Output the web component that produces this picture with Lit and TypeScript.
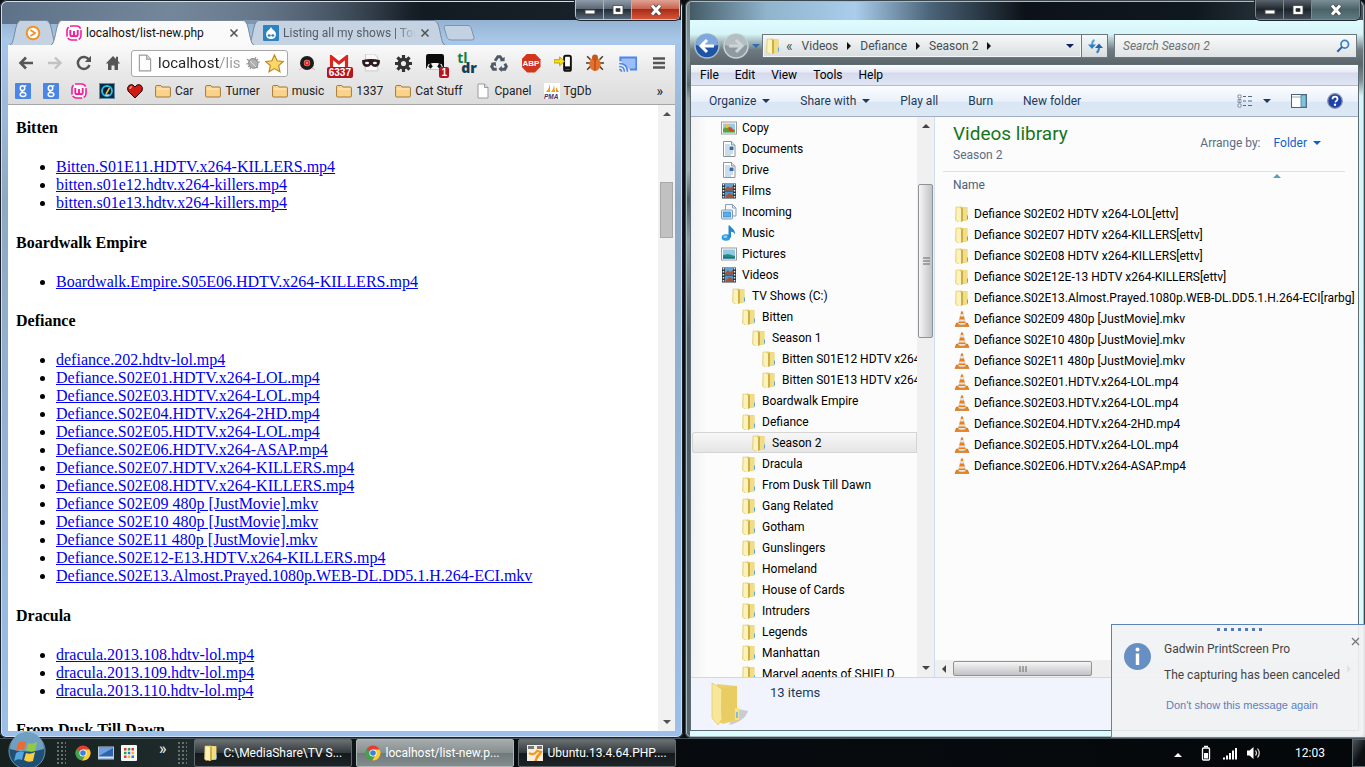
import { LitElement, html, css, svg, nothing } from "lit";
import { customElement } from "lit/decorators.js";
import { classMap } from "lit/directives/class-map.js";

const box = (size: number, view: string, body: unknown) =>
  html`<svg width=${size} height=${size} viewBox=${view} aria-hidden="true">${body}</svg>`;

const glyphs: Record<string, unknown> = {
  folder: svg`<path d="M2 1h6l1 13-6 1.500L1.500 14z" fill="#f6e9a0" stroke="#dcc56c" stroke-width=".6"/><path d="M6 .8l7.500.4v13l-7.500 1.300z" fill="#e5cb66"/><path d="M3 1.500l4 1V16l-4-1.400z" fill="#fbf3ba"/><path d="M7 2.500l2-.8V15l-2 1z" fill="#cdae4b"/><path d="M9 1.200h4v13.400H9z" fill="#f0dd84"/><path d="M13.500 9.500v4" stroke="#5aa5dc"/>`,
  picture: svg`<rect x=".5" y="2" width="15" height="12" fill="#fff" stroke="#9a9a9a"/><rect x="2" y="3.5" width="12" height="9" fill="#8ccbe8"/><path d="M2 9l5-1 7 2v2.500H2z" fill="#2c8d7b"/><path d="M2 10.500l12 1v1H2z" fill="#1b68a8"/>`,
  copy: svg`<rect x=".5" y="2" width="15" height="12" fill="#fff" stroke="#9a9a9a"/><rect x="2" y="3.500" width="12" height="9" fill="#9cc7ef"/><path d="M2 9l4-3 8 4v2.500H2z" fill="#58a338"/><circle cx="6" cy="6" r="2" fill="#f0c130"/><path d="M7 8l3-1 3 4-4 1z" fill="#d5482c"/>`,
  doc: svg`<path d="M2.500.5h8l3.500 3.500v11.500H2.500z" fill="#fff" stroke="#8b949c"/><path d="M10.500.5v3.500H14" fill="#dde6ee" stroke="#8b949c"/><path d="M4 4h5M4 6h4M4 8h4M4 10h8M4 12h8M4 14h6" stroke="#8fb0ce" stroke-width=".9"/><rect x="8.500" y="5.500" width="4" height="3.500" fill="#2e6ba8"/>`,
  film: svg`<rect x="1" y=".5" width="14" height="15" fill="#26363f"/><rect x="4" y="1" width="8" height="6.500" fill="#5da6dc"/><rect x="4" y="8.500" width="8" height="6.500" fill="#4b94cf"/><path d="M4 6l3-3 2 2 3-2v4.500H4zM5 13l3-3 4 2v3H5z" fill="#a3543e"/><path d="M2.500 1v14M13.500 1v14" stroke="#e6eef0" stroke-width="1.500" stroke-dasharray="1.500 1.500"/>`,
  incoming: svg`<path d="M4.500.5h7l3.500 3.500V12H4.500z" fill="#f4f8fc" stroke="#8a9db4"/><path d="M11.500.5V4H15" fill="none" stroke="#8a9db4"/><rect x=".5" y="6" width="11" height="9" rx="1" fill="#dcecf9" stroke="#7e99b8"/><rect x="2.500" y="8" width="7" height="5" fill="#54aee8" stroke="#3384c2" stroke-width=".7"/>`,
  music: svg`<ellipse cx="5" cy="12.500" rx="4.300" ry="3.200" fill="#2f9be0"/><path d="M7.500 12.500V.5h1.500c1 3 5.500 3.500 5 9-1-2-2-2.500-4-2.800v5.800z" fill="#2487cc"/><ellipse cx="4.300" cy="11.800" rx="2" ry="1.200" fill="#8ed2f7"/>`,
  vlc: svg`<path d="M2.500 12h11l1.500 3.500H1z" fill="#ee8115" stroke="#b95a08" stroke-width=".5"/><path d="M7.200.5h1.600L11.800 13c-2 1.300-5.600 1.300-7.600 0z" fill="#e4e4e4" stroke="#aaa" stroke-width=".3"/><path d="M7.100 1L7.300.4h1.400L9.200 3H6.800zM6.100 5.500h3.800l.8 3H5.300zM4.900 10.500h6.200l.4 1.500H4.500z" fill="#ef7d12"/>`,
  bmfolder: svg`<path d="M.6 3.500q0-1 1-1h4.200l1.200 1.500h7.400q1 0 1 1v8q0 1-1 1H1.600q-1 0-1-1z" fill="#fbd28a" stroke="#a37b3c"/><path d="M1.500 6h13" stroke="#ffecc4"/>`,
  page: svg`<path d="M3 1h6.500L13 4.500V15H3z" fill="#fdfdfd" stroke="#9b9b9b"/><path d="M9.500 1v3.500H13" fill="#ddd" stroke="#9b9b9b"/>`,
  google: svg`<rect width="16" height="16" rx="1" fill="#4a86e8"/><ellipse cx="7.500" cy="5.200" rx="2.200" ry="2.400" fill="none" stroke="#fff" stroke-width="1.500"/><path d="M9 3.300l2.300-.6" stroke="#fff" stroke-width="1.200"/><path d="M7.500 7.700q-1.800 1 .5 1.600" fill="none" stroke="#fff" stroke-width="1.200"/><ellipse cx="8" cy="11.600" rx="2.800" ry="2" fill="none" stroke="#fff" stroke-width="1.500"/>`,
  wamp: svg`<rect x="1" y="1" width="14" height="14" rx="4.500" fill="#fff" stroke="#f0209a" stroke-width="1.600" stroke-dasharray="10 1.500"/><path d="M4.300 5v4.500q0 1.700 1.700 1.700T8 9.500V6v3.500q0 1.700 1.900 1.700t1.800-1.700V5" fill="none" stroke="#f0209a" stroke-width="1.900"/>`,
  gauge: svg`<rect x=".5" y=".5" width="15" height="15" fill="#0d2a44" stroke="#6c8aa0"/><circle cx="8" cy="8" r="5" fill="#072238" stroke="#2ec0e8" stroke-width="1.800"/><path d="M7 11l3.500-6" stroke="#ffc12e" stroke-width="1.500"/><path d="M6 12h4" stroke="#fff"/>`,
  heart: svg`<path d="M8 15L1 8Q-.5 4 2.500 2 6 .5 8 4q2-3.500 5.500-2Q16.500 4 15 8z" fill="#cf1c12" stroke="#220606"/><path d="M3 6q0-2 2-2.500" stroke="#ff9a8a" stroke-width="1.500" fill="none"/>`,
  pma: svg`<rect width="16" height="16" fill="#fff"/><path d="M2 9q3-3 4-8v8zM7 9q3-3 3-7l1 7zM12 9V4l3 5z" fill="#f39a1e"/><text x="0" y="15.500" font-size="6.500" font-weight="700" font-style="italic" font-family="Liberation Sans" fill="#2c3470">PMA</text>`,
  back: svg`<path d="M15 8H3M8 2.500L2.500 8 8 13.500" fill="none" stroke="#555" stroke-width="2.600"/>`,
  fwd: svg`<path d="M1 8h12M8 2.500L13.500 8 8 13.500" fill="none" stroke="#c2c2c2" stroke-width="2.400"/>`,
  reload: svg`<path d="M12.800 4.500A6 6 0 1 0 13.500 10" fill="none" stroke="#555" stroke-width="2.500"/><path d="M15 .8V7H8.800z" fill="#555"/>`,
  home: svg`<path d="M8 1L.8 8.500H3V15h3.500v-4.500h3V15H13V8.500h2.200L13 6V1.800h-2v2.300z" fill="#555"/>`,
  bug: svg`<g stroke="#999" stroke-width="1.200"><path d="M2 4l11 9M1 9l14-2M5 14l6-12M3 12L13 4"/></g><ellipse cx="8" cy="8.500" rx="4.500" ry="5" fill="#b1b1b1" stroke="#8d8d8d" transform="rotate(-35 8 8)"/><path d="M5 6l6 6" stroke="#ddd"/>`,
  star: svg`<path d="M8 .8l2.200 4.900 5.200.6-3.900 3.500 1.100 5.200L8 12.300 3.400 15l1.100-5.200L.6 6.300l5.200-.6z" fill="#fcd667" stroke="#b98a2b"/>`,
  record: svg`<circle cx="8" cy="8" r="7" fill="#1c1c1c"/><circle cx="8" cy="8" r="3.200" fill="#f08a84"/><circle cx="8" cy="8" r="2.600" fill="#e2231c"/><circle cx="8" cy="8" r=".8" fill="#fff"/><path d="M0 15q3-3 4-1M12 14q2-2 4 1" stroke="#f4a4a4" fill="none"/>`,
  mask: svg`<path d="M3 0h8l3 3v12H3z" fill="#f8f8f8" stroke="#c5c5c5" stroke-width=".8"/><path d="M0 5.500q8-2 16 0 0 6-4 6-2.500 0-4-2-1.500 2-4 2-4 0-4-6z" fill="#2c1c1e"/><ellipse cx="4.500" cy="8" rx="1.800" ry="1.100" fill="#fff"/><ellipse cx="11.500" cy="8" rx="1.800" ry="1.100" fill="#fff"/>`,
  gear: svg`<g stroke="#333" stroke-width="3"><path d="M8 0v16M0 8h16M2.300 2.300l11.400 11.400M13.700 2.300L2.300 13.700"/></g><circle cx="8" cy="8" r="5.600" fill="#333"/><circle cx="8" cy="8" r="2.400" fill="#eee"/>`,
  panda: svg`<rect width="16" height="14" rx="2" fill="#0b0b0b"/><path d="M0 14l2-5 4-1h4l4 1 2 5z" fill="#f5f5f5"/><path d="M4 8l2 3-2 2-2-2zM12 8l2 3-2 2-2-2z" fill="#111"/>`,
  recycle: svg`<g fill="none" stroke="#4d5a66" stroke-width="2.600"><path d="M4.500 6L7 2.300h2L10.800 5M13.200 8.500l1.300 2.500-1.300 2.500H10M6 13.500H3L1.500 11l1.300-2.300"/></g><path d="M8.500 6.500h4.500V2.500zM10.500 10.500v5.500L7.500 13.300zM.5 8L5 7l.5 4z" fill="#4d5a66"/>`,
  phone: svg`<rect x="9" y="1.500" width="6" height="13.500" rx="1.500" fill="#fff" stroke="#111" stroke-width="1.700"/><path d="M9.500 11h5v3h-5z" fill="#111"/><path d="M0 5h5V2.500L9.500 6.500 5 10.500V8H0z" fill="#f6dc1c" stroke="#988400" stroke-width=".6"/>`,
  beetle: svg`<path d="M1 2l3 3M15 2l-3 3M0 8h16M1 14l3-3M15 14l-3-3" stroke="#5a3b1c" stroke-width="1.300"/><ellipse cx="8" cy="9" rx="5" ry="6" fill="#e5702a"/><circle cx="8" cy="3" r="2.600" fill="#c8551a"/><path d="M8 5v9.500" stroke="#a94510"/>`,
  cast: svg`<path d="M2 6V3h13.500v10H10" fill="#9dbdf6" stroke="#4c86ec" stroke-width="1.700"/><path d="M1 8q7 0 7 7M1 10.600q4.400 0 4.400 4.400M1 13q2 0 2 2" fill="none" stroke="#4c86ec" stroke-width="1.300"/>`,
  menu: svg`<path d="M2 3.500h12M2 8h12M2 12.500h12" stroke="#555" stroke-width="2.400"/>`,
  play: svg`<circle cx="8" cy="8" r="6.300" fill="#fff" stroke="#f19227" stroke-width="2"/><path d="M5.500 5L10 8l-4.500 3" fill="none" stroke="#f19227" stroke-width="1.800"/>`,
  drupal: svg`<rect width="16" height="16" rx="1" fill="#2d83bf"/><path d="M8 2q1 2 3 3.500t2 4Q12.500 14 8 14T3 9.500q0-2.500 2-4T8 2z" fill="#fff"/><ellipse cx="6.200" cy="10.500" rx="1.500" ry="1.200" fill="#2d83bf"/><ellipse cx="9.800" cy="10.500" rx="1.500" ry="1.200" fill="#2d83bf"/>`,
  chromium: svg`<circle cx="8" cy="8" r="7.500" fill="#e23d32"/><path d="M8 8L1.500 4.200A7.500 7.500 0 0 0 7.200 15.500L11 9z" fill="#3fa54a"/><path d="M8 4.500h6.600A7.500 7.500 0 0 1 7.200 15.500L11 9z" fill="#f9cf2f"/><circle cx="8" cy="8" r="3.600" fill="#fff"/><circle cx="8" cy="8" r="2.800" fill="#3f7de0"/>`,
  desktop: svg`<rect x=".5" y="2" width="15" height="12" fill="#2e63ae" stroke="#b8cadd"/><path d="M1 3h14L1 11z" fill="#6ea0dd"/><rect x="1" y="11.500" width="14" height="2" fill="#d5e2ef"/>`,
  apps: svg`<rect width="16" height="16" rx="1" fill="#f7f7f7"/><g><path d="M3 3h2.500v2.500H3zM10.500 3H13v2.500h-2.500zM3 10.500h2.500V13H3z" fill="#e23b35"/><path d="M6.800 3h2.500v2.500H6.800zM3 6.800h2.500v2.500H3z" fill="#2e9e46"/><path d="M6.800 6.800h2.500v2.500H6.800zM10.500 10.500H13V13h-2.500z" fill="#3974de"/><path d="M10.500 6.800H13v2.500h-2.500zM6.800 10.500h2.500V13H6.800z" fill="#f5b81d"/></g>`,
  putty: svg`<rect width="16" height="16" fill="#f5eee0"/><path d="M1 1h6v3H1zM10 1h5v3h-5z" fill="#777"/><path d="M2 8q5 3 8-2l4 1-6 9M9 16q0-5 5-8" fill="none" stroke="#f0971c" stroke-width="2.200"/>`,
  refresh: svg`<path d="M7.500 2Q5 3 5 8" fill="none" stroke="#45a7dc" stroke-width="2.200"/><path d="M1 6.500h8L5 11z" fill="#2f7fc4"/><path d="M9.500 14.500Q12 13.500 12 9" fill="none" stroke="#3a83c4" stroke-width="2.200"/><path d="M8 10h8l-4-4.500z" fill="#2862ae"/>`,
  search: svg`<circle cx="10" cy="6" r="4.300" fill="#e9f3fb" stroke="#3b82c4" stroke-width="2"/><path d="M7 9l-5.500 5.500" stroke="#2b62ad" stroke-width="2.400"/>`,
  views: svg`<g fill="#fff" stroke="#6a7f96" stroke-width=".8"><path d="M1 2h3v3H1zM1 6.500h3v3H1zM1 11h3v3H1z"/></g><path d="M6 3.500h3M6 8h3M6 12.500h3M11 3.500h4M11 8h4M11 12.500h4" stroke="#54687f"/><path d="M2 8h1" stroke="#c33"/>`,
  preview: svg`<rect x=".5" y="1.500" width="15" height="13" fill="#fff" stroke="#4d617c"/><path d="M1 4h9" stroke="#9aa"/><rect x="10" y="2" width="5" height="12" fill="#7fc4dc" stroke="#4d7d9c" stroke-width=".8"/>`,
  help: svg`<circle cx="8" cy="8" r="7.300" fill="#1e41a8" stroke="#8a93a5" stroke-width="1.300"/><path d="M5.500 6.200q0-2.500 2.500-2.500t2.500 2.200Q10.500 7.500 8 9" fill="none" stroke="#fff" stroke-width="1.800"/><circle cx="8" cy="11.800" r="1.200" fill="#fff"/>`,
  battery: svg`<rect x="4.500" y="3" width="7" height="12" rx="1" fill="none" stroke="#fff" stroke-width="1.300"/><path d="M6 1.500h4" stroke="#fff" stroke-width="1.500"/><path d="M6 8h4v5.500H6z" fill="#fff"/>`,
  signal: svg`<path d="M2 12.500v2M5 10.500v4M8 8v6.500M11 5.500v9M14 3v11.500" stroke="#fff" stroke-width="2"/>`,
  sound: svg`<path d="M1 5.500h2.500L7.500 2v12L3.500 10.500H1z" fill="#fff"/><path d="M9.500 5.500q2 2.500 0 5M11.500 3.500q3.500 4.500 0 9" fill="none" stroke="#ddd" stroke-width="1.200"/>`,
};
const icon = (name: string, size = 16) => box(size, "0 0 16 16", glyphs[name]);
const tri = (dir: "up" | "down" | "left" | "right") => html`<i class="tri ${dir}"></i>`;

const triStyles = css`
  .tri { display: inline-block; flex: none; width: 0; height: 0; border: 4px solid transparent; }
  .tri.down { border-top-color: currentColor; border-bottom-width: 0; }
  .tri.up { border-bottom-color: currentColor; border-top-width: 0; }
  .tri.right { border-left-color: currentColor; border-right-width: 0; }
  .tri.left { border-right-color: currentColor; border-left-width: 0; }
`;
const baseStyles = css`
  * { box-sizing: border-box; }
  button, input { font: inherit; color: inherit; background: none; border: 0; padding: 0; margin: 0; min-width: 0; }
  input { outline: 0; }
  svg { display: block; flex: none; }
  a { color: inherit; text-decoration: none; }
`;

@customElement("caption-buttons")
class CaptionButtons extends LitElement {
  static styles = [baseStyles, css`
    :host { display: flex; height: 20px; border: 1px solid #b9c3cd; border-top: 0; border-radius: 0 0 5px 5px; overflow: hidden; box-shadow: 0 0 0 1px #20262d; }
    button { display: grid; place-items: center; width: 28px; border-right: 1px solid #a9b4bf; background: linear-gradient(#8f9ba8, #5c6875 45%, #232c36 50%, #56677a); }
    .close { width: 47px; border: 0; background: linear-gradient(#e0a293, #cb6450 45%, #a82d17 50%, #d5553a); }
    :host([inactive]) { border-color: #7d878f; }
    :host([inactive]) button { border-color: #7d878f; background: linear-gradient(#5b646d, #1d242b 50%, #414c58); }
    :host([inactive]) .close { background: linear-gradient(#7c9097, #4b6267 50%, #5d7a82); }
  `];
  render() {
    return html`
      <button aria-label="Minimize">${box(14, "0 0 14 14", svg`<rect x="2" y="7" width="10" height="4" fill="#fff" stroke="#444"/>`)}</button>
      <button aria-label="Maximize">${box(14, "0 0 14 14", svg`<path d="M2 2.500h10v9H2zM5 5.500v3h4v-3z" fill="#fff" fill-rule="evenodd" stroke="#444" stroke-width=".8"/>`)}</button>
      <button class="close" aria-label="Close">${box(14, "0 0 14 14", svg`<path d="M3 2.500l8 9M11 2.500l-8 9" stroke="#444" stroke-width="4.600"/><path d="M3 2.500l8 9M11 2.500l-8 9" stroke="#fff" stroke-width="3"/>`)}</button>`;
  }
}

const shows: [string, string[]][] = [
  ["Bitten", ["Bitten.S01E11.HDTV.x264-KILLERS.mp4", "bitten.s01e12.hdtv.x264-killers.mp4", "bitten.s01e13.hdtv.x264-killers.mp4"]],
  ["Boardwalk Empire", ["Boardwalk.Empire.S05E06.HDTV.x264-KILLERS.mp4"]],
  ["Defiance", [
    "defiance.202.hdtv-lol.mp4", "Defiance.S02E01.HDTV.x264-LOL.mp4", "Defiance.S02E03.HDTV.x264-LOL.mp4",
    "Defiance.S02E04.HDTV.x264-2HD.mp4", "Defiance.S02E05.HDTV.x264-LOL.mp4", "Defiance.S02E06.HDTV.x264-ASAP.mp4",
    "Defiance.S02E07.HDTV.x264-KILLERS.mp4", "Defiance.S02E08.HDTV.x264-KILLERS.mp4", "Defiance S02E09 480p [JustMovie].mkv",
    "Defiance S02E10 480p [JustMovie].mkv", "Defiance S02E11 480p [JustMovie].mkv", "Defiance.S02E12-E13.HDTV.x264-KILLERS.mp4",
    "Defiance.S02E13.Almost.Prayed.1080p.WEB-DL.DD5.1.H.264-ECI.mkv"]],
  ["Dracula", ["dracula.2013.108.hdtv-lol.mp4", "dracula.2013.109.hdtv-lol.mp4", "dracula.2013.110.hdtv-lol.mp4"]],
  ["From Dusk Till Dawn", []],
];

@customElement("browser-window")
class BrowserWindow extends LitElement {
  static styles = [baseStyles, triStyles, css`
    :host { display: flex; flex-direction: column; min-width: 0; min-height: 0; padding: 0 8px 7px 8px; border-radius: 7px 7px 6px 6px; box-shadow: inset 0 0 0 1px #1a222c, inset 0 0 0 2px #cfdff0;
      background: linear-gradient(100deg, #5d7288 0, #74869a 25%, transparent 60%) 0 0 / 100% 24px no-repeat, linear-gradient(90deg, #7f93a8 0, #4b5a6b 38%, #131b22 62%, #1b242d 100%) 0 0 / 100% 20px no-repeat, linear-gradient(#7f9cbd, #a9c8e8 40px, #a5c6ea 45px, #8ea9c4 200px, #9cc0ea); }
    .strip { display: flex; align-items: flex-end; height: 45px; flex: none; padding-left: 2px; margin-right: -5px; }
    .tab { position: relative; display: flex; align-items: center; gap: 4px; height: 25px; padding: 0 15px; margin-right: -6px; color: #555d66; white-space: nowrap; }
    .tab .shape { position: absolute; inset: 0; width: 100%; height: 100%; z-index: 0; }
    .tab > * { position: relative; z-index: 1; }
    .tab span { flex: 1; text-align: left; overflow: hidden; }
    .tab.pinned { width: 47px; }
    .tab.current { width: 203px; color: #111; z-index: 2; }
    .tab.other { width: 197px; }
    .tab.other span { mask-image: linear-gradient(90deg, #000 85%, transparent); }
    .new { align-self: flex-end; margin: 0 0 4px 4px; }
    caption-buttons { margin-left: auto; align-self: flex-start; }
    .tools { flex: none; background: linear-gradient(#fafafa, #e9e9e9 45%, #dcdcdc); border-bottom: 1px solid #a6a6a6; color: #222; }
    .bar { display: flex; align-items: center; height: 36px; padding: 0 0 0 3px; }
    .nav { display: grid; place-items: center; width: 29px; height: 28px; }
    .ext { position: relative; display: grid; place-items: center; width: 32px; height: 28px; flex: none; }
    .omni { display: flex; align-items: center; gap: 4px; flex: 1; min-width: 0; height: 27px; margin: 0 3px 0 4px; padding: 0 3px 0 4px; background: #fff; border: 1px solid #a8a8a8; border-radius: 3px; }
    .omni input { flex: 1; width: 0; font-size: 15px; color: transparent; background: linear-gradient(90deg, #222 62px, #9a9a9a 62px); -webkit-background-clip: text; background-clip: text; }
    .badge { position: absolute; bottom: -1px; right: 2px; padding: 0 2px; border-radius: 2px; background: #b9121f; color: #fff; font: bold 10px/11px "Liberation Sans", sans-serif; }
    .abp { display: grid; place-items: center; width: 19px; height: 19px; background: #d2341c; color: #fff; clip-path: polygon(30% 0, 70% 0, 100% 30%, 100% 70%, 70% 100%, 30% 100%, 0 70%, 0 30%); font: bold 8px "Liberation Sans", sans-serif; }
    .tldr { display: grid; justify-items: start; font: bold 14px/10px "Open Sans", sans-serif; color: #15803c; }
    .tldr b { color: #123f56; padding-left: 4px; }
    .marks { display: flex; align-items: center; gap: 12px; height: 23px; padding: 0 12px 4px 7px; }
    .marks a { display: flex; align-items: center; gap: 4px; white-space: nowrap; }
    .marks .more { margin-left: auto; font-size: 14px; }
    .view { display: flex; flex: 1; min-height: 0; background: #fff; }
    .page { flex: 1; min-width: 0; overflow: hidden; padding: 0 8px; font: 16px "Liberation Serif", serif; color: #000; }
    .page h4:first-child { margin-top: 14px; }
    .page li { line-height: 18px; }
    .page a { color: #0000ee; text-decoration: underline; }
    .scroll { display: flex; flex-direction: column; align-items: center; width: 17px; padding: 7px 0; background: #f1f1f1; color: #505050; }
    .thumb { width: 13px; height: 56px; margin-top: 66px; background: #c1c1c1; border: 1px solid #a8a8a8; }
    .scroll .down { margin-top: auto; }
  `];
  private tab(kind: string, name: string, width: number, title: string) {
    const fill = kind === "current" ? "#fafafa" : "#c5d2e2";
    return html`<button class="tab ${kind}" aria-label=${title || "Pinned tab"}>
      <svg class="shape" viewBox="0 0 ${width} 25" preserveAspectRatio="none"><path d="M0 25C4 25 5 5 8 2.500 9 .8 10 .5 12 .5H${width - 12}c2 0 3 .3 4 2C${width - 5} 5 ${width - 4} 25 ${width} 25" fill=${fill} stroke="#76879a"/></svg>
      ${icon(name)}
      ${title ? html`<span>${title}</span>${box(10, "0 0 10 10", svg`<path d="M1.500 1.500l7 7M8.500 1.500l-7 7" stroke="#555" stroke-width="1.600"/>`)}` : nothing}
    </button>`;
  }
  private ext(label: string, body: unknown) {
    return html`<button class="ext" aria-label=${label}>${body}</button>`;
  }
  render() {
    const marks: [string, string][] = [["google", ""], ["google", ""], ["wamp", ""], ["gauge", ""], ["heart", ""], ["bmfolder", "Car"], ["bmfolder", "Turner"], ["bmfolder", "music"], ["bmfolder", "1337"], ["bmfolder", "Cat Stuff"], ["page", "Cpanel"], ["pma", "TgDb"]];
    return html`
      <div class="strip">
        ${this.tab("pinned", "play", 47, "")}
        ${this.tab("current", "wamp", 203, "localhost/list-new.php")}
        ${this.tab("other", "drupal", 197, "Listing all my shows | Tom")}
        <button class="new" aria-label="New tab"><svg width="32" height="16" viewBox="0 0 32 16"><path d="M1 2Q1 .5 3 .5h22q2 0 3 2l3 10q.5 2.500-2 2.500H8q-3 0-4-2.500z" fill="#c3d2e2" stroke="#7f93a8"/></svg></button>
        <caption-buttons></caption-buttons>
      </div>
      <div class="tools">
        <div class="bar">
          <button class="nav" aria-label="Back">${icon("back")}</button>
          <button class="nav" aria-label="Forward">${icon("fwd")}</button>
          <button class="nav" aria-label="Reload">${icon("reload")}</button>
          <button class="nav" aria-label="Home">${icon("home")}</button>
          <div class="omni">${icon("page", 18)}<input aria-label="Address" value="localhost/lis" />${icon("bug")}${icon("star", 19)}</div>
          ${this.ext("Recorder", icon("record"))}
          ${this.ext("Mail", html`<svg width="22" height="16" viewBox="0 0 22 16"><rect x="2" y="0" width="18" height="13" fill="#fff"/><path d="M3.500 13V2L11 8l7.500-6v11" fill="none" stroke="#d9261f" stroke-width="3.200"/></svg><span class="badge">6337</span>`)}
          ${this.ext("Mask", icon("mask", 18))}
          ${this.ext("Settings", icon("gear", 17))}
          ${this.ext("Notes", html`${icon("panda", 18)}<span class="badge">1</span>`)}
          ${this.ext("tldr", html`<span class="tldr">tl<b>dr</b></span>`)}
          ${this.ext("Recycle", icon("recycle", 18))}
          ${this.ext("Blocker", html`<span class="abp">ABP</span>`)}
          ${this.ext("Phone", icon("phone", 18))}
          ${this.ext("Beetle", icon("beetle", 18))}
          ${this.ext("Cast", icon("cast", 19))}
          ${this.ext("Menu", icon("menu"))}
        </div>
        <nav class="marks">
          ${marks.map(([name, text]) => html`<a href="#" aria-label=${text || name}>${icon(name)}${text}</a>`)}
          <button class="more" aria-label="More bookmarks">»</button>
        </nav>
      </div>
      <div class="view">
        <main class="page">
          ${shows.map(([title, files]) => html`<h4>${title}</h4>
            ${files.length ? html`<ul>${files.map((f) => html`<li><a href="#">${f}</a></li>`)}</ul>` : nothing}`)}
        </main>
        <div class="scroll">${tri("up")}<div class="thumb"></div>${tri("down")}</div>
      </div>`;
  }
}

const tree: [number, string, string][] = [
  [0, "copy", "Copy"], [0, "doc", "Documents"], [0, "doc", "Drive"], [0, "film", "Films"], [0, "incoming", "Incoming"],
  [0, "music", "Music"], [0, "picture", "Pictures"], [0, "film", "Videos"], [1, "folder", "TV Shows (C:)"], [2, "folder", "Bitten"],
  [3, "folder", "Season 1"], [4, "folder", "Bitten S01E12 HDTV x264-"], [4, "folder", "Bitten S01E13 HDTV x264-"],
  ...["Boardwalk Empire", "Defiance"].map((t): [number, string, string] => [2, "folder", t]),
  [3, "folder", "Season 2"],
  ...["Dracula", "From Dusk Till Dawn", "Gang Related", "Gotham", "Gunslingers", "Homeland", "House of Cards", "Intruders", "Legends", "Manhattan", "Marvel agents of SHIELD"]
    .map((t): [number, string, string] => [2, "folder", t]),
];
const files = [
  "Defiance S02E02 HDTV x264-LOL[ettv]", "Defiance S02E07 HDTV x264-KILLERS[ettv]", "Defiance S02E08 HDTV x264-KILLERS[ettv]",
  "Defiance S02E12E-13 HDTV x264-KILLERS[ettv]", "Defiance.S02E13.Almost.Prayed.1080p.WEB-DL.DD5.1.H.264-ECI[rarbg]",
  "Defiance S02E09 480p [JustMovie].mkv", "Defiance S02E10 480p [JustMovie].mkv", "Defiance S02E11 480p [JustMovie].mkv",
  "Defiance.S02E01.HDTV.x264-LOL.mp4", "Defiance.S02E03.HDTV.x264-LOL.mp4", "Defiance.S02E04.HDTV.x264-2HD.mp4",
  "Defiance.S02E05.HDTV.x264-LOL.mp4", "Defiance.S02E06.HDTV.x264-ASAP.mp4",
];

@customElement("explorer-window")
class ExplorerWindow extends LitElement {
  static styles = [baseStyles, triStyles, css`
    :host { display: flex; flex-direction: column; min-width: 0; min-height: 0; padding: 0 6px 7px 5px; border-radius: 7px 7px 6px 6px; box-shadow: inset 0 0 0 1px #3c464d, inset 0 0 0 2px #a9bcc0;
      background: linear-gradient(#6f7c82, #8b979b 60px, #5c676c 85px, #98a4a8 100px, #a5b0b3 170px, #4a5961 200px, #8a9ba3 240px, #4b5a66 330px, #56646e) 0 0 / 5px 100% no-repeat, linear-gradient(90deg, #3f5560 0, #8fb4cc 12%, #a9cdeb 25%, #4b6478 36%, #0c1218 50%, #10181f 75%, #46545e 100%) 0 0 / 100% 20px no-repeat, linear-gradient(#dffbff 20px, #d6f5f8 34px, #6d7a80 50px, #5b666b 64px, #7a8c92 80px, #d3f6fa 96px, #dcfdff); }
    .title { display: flex; justify-content: flex-end; height: 34px; flex: none; }
    .title caption-buttons { margin-right: -1px; }
    .addr { display: flex; align-items: center; height: 24px; margin: 0 2px 6px 4px; flex: none; color: #454d55; }
    .pill { display: flex; align-items: center; gap: 3px; margin-right: 2px; color: #2c6fb0; }
    .crumbs { display: flex; align-items: center; flex: 1; min-width: 0; height: 24px; padding: 0 7px 0 2px; border: 1px solid #6e777c; background: linear-gradient(#f6f9fa, #d8dddf); box-shadow: inset 0 0 0 1px #f4f7f8; }
    .crumbs button { margin: 0 9px 0 9px; }
    .crumbs .parents { margin: 0 0 0 5px; font-size: 14px; }
    .crumbs .tri { color: #111; }
    .crumbs .tri.down { color: #10205c; margin-left: auto; }
    .refresh { display: grid; place-items: center; width: 26px; height: 24px; border: 1px solid #6e777c; border-left: 0; background: linear-gradient(#f6f9fa, #d8dddf); }
    .find { display: flex; align-items: center; width: 243px; height: 24px; margin-left: 6px; padding: 0 6px 0 8px; border: 1px solid #6e777c; background: linear-gradient(#f9fbfb, #dfe3e5); }
    .find input { flex: 1; font-style: italic; }
    .find input::placeholder { color: #6b7175; opacity: 1; }
    .body { display: flex; flex-direction: column; flex: 1; min-height: 0; border: 1px solid #5f6c74; background: #fcfcfc; color: #000; }
    .menu { display: flex; align-items: center; gap: 16px; height: 21px; flex: none; padding-left: 9px; background: linear-gradient(#fbfcfe, #e8ebf6 35%, #d4daec 40%, #e1e6f6); border-bottom: 1px solid #b4bccb; }
    .cmd { display: flex; align-items: center; gap: 30px; height: 31px; flex: none; padding: 0 15px 0 18px; color: #1e395b; background: linear-gradient(#fbfdff, #eaf1fa 50%, #dbe6f4 55%, #dde8f5); border-bottom: 1px solid #a0afc3; }
    .cmd button { display: flex; align-items: center; gap: 6px; white-space: nowrap; }
    .cmd .right { display: flex; align-items: center; gap: 20px; margin-left: auto; }
    .cmd .views { gap: 10px; }
    .split { display: flex; flex: 1; min-height: 0; }
    .side { display: flex; width: 243px; flex: none; }
    .tree { flex: 1; min-width: 0; overflow: hidden; padding: 0 0 0 1px; background: linear-gradient(90deg, #f1f2f4, #fcfcfc 16px); }
    .node { display: flex; align-items: center; gap: 5px; width: 100%; height: 21px; white-space: nowrap; padding-left: var(--indent); }
    .node.chosen { box-shadow: inset 0 0 0 1px #d4d4d4; border-radius: 3px 0 0 3px; background: linear-gradient(#f8f8f8, #e4e4e4); }
    .vscroll { display: flex; flex-direction: column; align-items: center; width: 17px; padding: 7px 0; flex: none; background: #f0f0f0; color: #444; }
    .grip { display: grid; place-items: center; border: 1px solid #8f9398; border-radius: 2px; background: linear-gradient(90deg, #f6f6f6, #dedee0 45%, #c2c3c7); }
    .vscroll .grip { width: 15px; height: 154px; margin-top: 56px; }
    .vscroll .down { margin-top: auto; }
    .main { display: flex; flex-direction: column; flex: 1; min-width: 0; border-left: 1px solid #cfdff0; }
    .lib { display: flex; align-items: center; height: 55px; flex: none; margin: 0 13px 0 8px; padding: 0 24px 2px 10px; border-bottom: 1px solid #d8e3ef; color: #5b6b85; }
    .lib h1 { margin: 0; font-size: 19px; line-height: 24px; font-weight: 400; color: #16751a; }
    .lib p { margin: 0; line-height: 18px; }
    .lib .arr { margin-left: auto; }
    .lib .folder { display: flex; align-items: center; gap: 6px; margin-left: 13px; color: #0b62cf; }
    .head { display: flex; flex: none; height: 31px; padding-left: 18px; color: #4c607a; }
    .head button { height: 26px; }
    .head .tri { margin: 2px 0 0 auto; margin-right: 77px; color: #5d9db8; }
    ul { list-style: none; margin: 0; padding: 0 0 0 19px; flex: 1; min-height: 0; overflow: hidden; }
    li { display: flex; align-items: center; gap: 4px; height: 21px; white-space: nowrap; }
    .hscroll { display: flex; align-items: center; height: 17px; flex: none; padding: 0 7px; background: #f0f0f0; color: #444; }
    .hscroll .grip { width: 139px; height: 15px; margin-left: 7px; background: linear-gradient(#f6f6f6, #dedee0 45%, #c2c3c7); }
    .hscroll .right { margin-left: auto; }
    .details { display: flex; height: 53px; flex: none; padding: 5px 0 0 18px; gap: 19px; border-top: 1px solid #ccd8e8; background: #f1f4fc; color: #1e395b; font-size: 13px; line-height: 20px; }
  `];
  render() {
    const crumb = (t: string) => html`<button>${t}</button>${tri("right")}`;
    return html`
      <div class="title"><caption-buttons inactive></caption-buttons></div>
      <div class="addr">
        <div class="pill">
          <button aria-label="Back">${box(26, "0 0 26 26", svg`<circle cx="13" cy="13" r="12" fill="#1d54a6" stroke="#a9bac6" stroke-width="1.500"/><path d="M2 12a11 11 0 0 1 22 0q-11 3-22 0z" fill="#7fa9dc"/><path d="M20 13H8M13 7l-6 6 6 6" fill="none" stroke="#fff" stroke-width="3"/>`)}</button>
          <button aria-label="Forward">${box(26, "0 0 26 26", svg`<circle cx="13" cy="13" r="12" fill="#8e9a9f" stroke="#c9d3d6" stroke-width="1.500"/><path d="M2 12a11 11 0 0 1 22 0q-11 3-22 0z" fill="#b4bfc2"/><path d="M6 13h12M13 7l6 6-6 6" fill="none" stroke="#cdd4d6" stroke-width="3"/>`)}</button>
          ${tri("down")}
        </div>
        <div class="crumbs">${icon("folder")}<button class="parents" aria-label="Parents">«</button>${crumb("Videos")}${crumb("Defiance")}${crumb("Season 2")}${tri("down")}</div>
        <button class="refresh" aria-label="Refresh">${icon("refresh")}</button>
        <label class="find"><input aria-label="Search" placeholder="Search Season 2" />${icon("search", 14)}</label>
      </div>
      <div class="body">
        <div class="menu">${["File", "Edit", "View", "Tools", "Help"].map((t) => html`<button>${t}</button>`)}</div>
        <div class="cmd">
          <button>Organize ${tri("down")}</button><button>Share with ${tri("down")}</button><button>Play all</button><button>Burn</button><button>New folder</button>
          <div class="right"><button class="views" aria-label="Change view">${icon("views")}${tri("down")}</button><button aria-label="Preview pane">${icon("preview")}</button><button aria-label="Help">${icon("help")}</button></div>
        </div>
        <div class="split">
          <div class="side">
            <nav class="tree">${tree.map(([level, name, text]) => html`<button class=${classMap({ node: true, chosen: text === "Season 2" })} style="--indent:${29 + level * 10}px">${icon(name)}${text}</button>`)}</nav>
            <div class="vscroll">${tri("up")}<div class="grip">${box(8, "0 0 8 8", svg`<path d="M1 1h7M1 4h7M1 7h7" stroke="#666"/>`)}</div>${tri("down")}</div>
          </div>
          <div class="main">
            <div class="lib"><div><h1>Videos library</h1><p>Season 2</p></div><span class="arr">Arrange by:</span><button class="folder">Folder ${tri("down")}</button></div>
            <div class="head"><button>Name</button>${tri("up")}</div>
            <ul>${files.map((f) => html`<li>${icon(/\.(mkv|mp4)$/.test(f) ? "vlc" : "folder")}${f}</li>`)}</ul>
            <div class="hscroll">${tri("left")}<div class="grip">${box(8, "0 0 8 8", svg`<path d="M1 1v6M4 1v6M7 1v6" stroke="#666"/>`)}</div>${tri("right")}</div>
          </div>
        </div>
        <div class="details">${box(42, "0 0 42 42", svg`<path d="M20 42q16-4 19-14l-10-2z" fill="#c9ccd4"/><path d="M8 1l20 2v29l3-2v7l-18 4z" fill="#ecd16a"/><path d="M11 5l17-2v33l-17 4z" fill="#e9cd62"/><path d="M3 0l10 6q-1 20 0 30l-4 6-6-7z" fill="#f8e79a" stroke="#e0c666" stroke-width=".7"/><path d="M26 25h4v12h-4z" fill="#f7e389"/><path d="M28 29v6" stroke="#7dbde8" stroke-width="2"/>`)}<span>13 items</span></div>
      </div>`;
  }
}

@customElement("app-root")
class AppRoot extends LitElement {
  static styles = [baseStyles, triStyles, css`
    :host { position: relative; display: grid; grid-template: minmax(0, 1fr) 29px / 683fr 680fr; column-gap: 2px; height: 100vh; overflow: hidden; background: #0b1014; font: 12px Roboto, sans-serif; }
    .taskbar { grid-column: 1 / -1; display: flex; align-items: center; padding-left: 8px; border-top: 1px solid #46535a; color: #fff; background: linear-gradient(90deg, #16201f, #1f2c2b 14%, #080c10 30%, #05080b); }
    .start { margin-top: -5px; }
    .dots { width: 10px; height: 24px; margin-left: 10px; background: radial-gradient(#65706f 1px, transparent 1px) 0 0 / 4px 4px; }
    .quick { display: flex; gap: 7px; margin-left: 9px; }
    .more { margin: 0 0 8px 22px; font-size: 16px; line-height: 16px; }
    .tasks { display: flex; gap: 4px; margin-left: 7px; }
    .task { display: flex; align-items: center; gap: 5px; width: 158px; height: 28px; padding: 0 8px; white-space: nowrap; border: 1px solid #606a6e; border-radius: 2px; background: linear-gradient(#6a6f72, #33393c 48%, #15191b 52%, #1d2326); }
    .task.on { border-color: #aeb6b8; background: linear-gradient(#a6abac, #87908f 48%, #6f7b7b 52%, #838c8c); }
    .tray { display: flex; align-items: center; gap: 8px; margin-left: auto; height: 28px; }
    .clock { margin-left: 25px; }
    .show { align-self: stretch; width: 13px; margin-left: 19px; border: 1px solid #59646b; border-right: 0; background: linear-gradient(120deg, #4c5358, #0c1013 60%); }
    .toast { position: absolute; right: 0; bottom: 29px; width: 254px; height: 114px; padding: 3px 10px 0 12px; border: 1px solid #5d82b8; border-right: 0; background: #f1f2f3e8; color: #444; z-index: 5; }
    .handle { width: 46px; height: 3px; margin: 0 auto; background: repeating-linear-gradient(90deg, #5478b0 0 3px, transparent 3px 7px); }
    .msg { display: flex; gap: 13px; }
    .msg svg { margin-top: 12px; }
    .msg h2, .msg p { margin: 0; font-size: 12px; line-height: 26px; font-weight: 400; white-space: nowrap; }
    .msg div { padding-top: 5px; }
    .msg a { display: block; padding: 8px 0 0 2px; line-height: 18px; font-family: "Liberation Sans", sans-serif; font-size: 11px; color: #5a7fc0; }
    .x { position: absolute; right: 5px; top: 12px; }
  `];
  render() {
    const task = (name: string, text: string, on = false) => html`<button class=${classMap({ task: true, on })}>${icon(name)}${text}</button>`;
    return html`
      <browser-window></browser-window>
      <explorer-window></explorer-window>
      <footer class="taskbar">
        <button class="start" aria-label="Start">${box(38, "0 0 38 38", svg`<circle cx="19" cy="19" r="18" fill="#1f4f74" stroke="#6f94ab"/><path d="M2 17a17 17 0 0 1 34 0q-17 5-34 0z" fill="#6fa0bf"/><path d="M10 11q4-3 8-1l-2 8q-4-2-8 1z" fill="#ee6a35"/><path d="M20 11q4 2 9-1l-2 9q-5 2-9-1z" fill="#93c748"/><path d="M8 21q4-3 8-1l-2 8q-4-2-8 1z" fill="#55a5e0"/><path d="M18 21q4 2 9-1l-2 9q-5 2-9-1z" fill="#fbcf3f"/>`)}</button>
        <div class="dots"></div>
        <div class="quick"><button aria-label="Chrome">${icon("chromium")}</button><button aria-label="Desktop">${icon("desktop")}</button><button aria-label="Apps">${icon("apps")}</button></div>
        <button class="more" aria-label="More">»</button>
        <div class="dots"></div>
        <div class="tasks">${task("folder", "C:\\MediaShare\\TV S...")}${task("chromium", "localhost/list-new.p...", true)}${task("putty", "Ubuntu.13.4.64.PHP....")}</div>
        <div class="tray"><button aria-label="Hidden icons">${tri("up")}</button><span></span>${icon("battery")}${icon("signal")}${icon("sound")}<time class="clock">12:03</time><button class="show" aria-label="Show desktop"></button></div>
      </footer>
      <aside class="toast">
        <div class="handle"></div>
        <div class="msg">
          ${box(27, "0 0 27 27", svg`<circle cx="13.500" cy="13.500" r="13.500" fill="#6690c4"/><circle cx="13.500" cy="6.500" r="2" fill="#fff"/><path d="M11.800 10.500h3.400V22h-3.400z" fill="#fff"/>`)}
          <div><h2>Gadwin PrintScreen Pro</h2><p>The capturing has been canceled</p><a href="#">Don't show this message again</a></div>
        </div>
        <button class="x" aria-label="Close">${box(9, "0 0 9 9", svg`<path d="M1 1l7 7M8 1L1 8" stroke="#777" stroke-width="1.300"/>`)}</button>
      </aside>`;
  }
}
